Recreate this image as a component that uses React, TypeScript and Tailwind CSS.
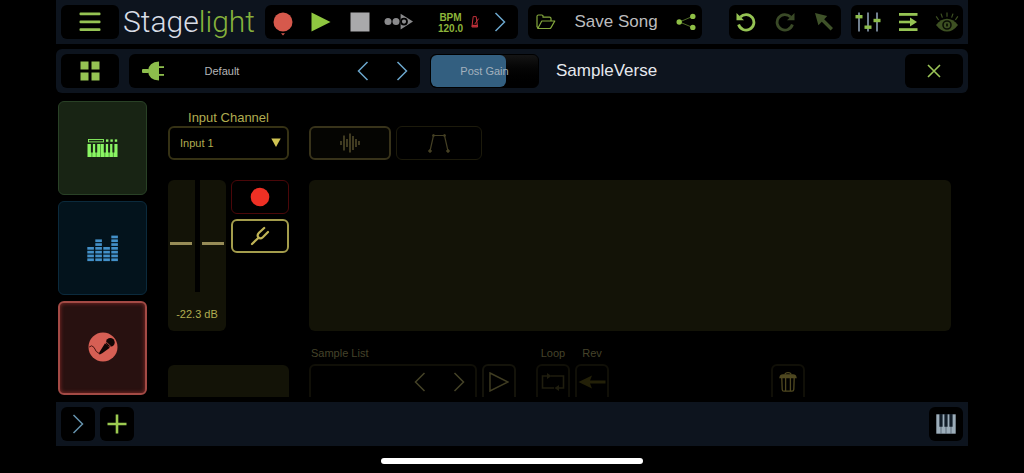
import React, { useState } from "react";
import clsx from "clsx";

type IconButtonProps = {
  label: string;
  className?: string;
  disabled?: boolean;
  children: React.ReactNode;
};

const IconButton = ({ label, className, disabled, children }: IconButtonProps) => (
  <button
    type="button"
    aria-label={label}
    disabled={disabled}
    className={clsx("flex shrink-0 items-center justify-center", className)}
  >
    {children}
  </button>
);

const Chevron = ({ left, className }: { left?: boolean; className?: string }) => (
  <svg width="12" height="20" viewBox="0 0 12 20" fill="none" stroke="currentColor" strokeWidth="1.5" className={className}>
    <path d={left ? "M10.5 1 L1.5 10 L10.5 19" : "M1.5 1 L10.5 10 L1.5 19"} />
  </svg>
);

const TopBar = () => (
  <header className="flex h-11 items-center bg-[#0d141e] px-[5px]">
    <IconButton label="Menu" className="h-[34px] w-[58px] rounded-md bg-black text-[#95c353]">
      <svg width="22" height="20" viewBox="0 0 22 20" fill="currentColor">
        <rect x="0.5" y="0.5" width="21" height="2.8" rx="1" />
        <rect x="0.5" y="8.4" width="21" height="2.8" rx="1" />
        <rect x="0.5" y="16.3" width="21" height="2.8" rx="1" />
      </svg>
    </IconButton>

    <h1 className="ml-1 w-[142px] font-[Roboto,'Liberation_Sans',sans-serif] text-[30px] leading-[42px] font-light text-[#d8dde6]">
      Stage<span className="text-[#86b13c]">light</span>
    </h1>

    <div className="flex h-[34px] w-[253px] items-stretch rounded-md bg-black">
      <IconButton label="Record" className="w-9 text-[#d6594c]">
        <svg width="20" height="28" viewBox="0 0 20 28" fill="currentColor">
          <circle cx="10" cy="14" r="9.5" />
          <path d="M8 25.2 H12 L10 27.4 Z" />
        </svg>
      </IconButton>
      <IconButton label="Play" className="w-[39px] text-[#8fc740]">
        <svg width="20" height="20" viewBox="0 0 20 20" fill="currentColor">
          <path d="M0.5 0.5 L19.5 10 L0.5 19.5 Z" />
        </svg>
      </IconButton>
      <IconButton label="Stop" className="w-[39px] text-[#a9a9ab]">
        <svg width="20" height="20" viewBox="0 0 20 20" fill="currentColor">
          <rect x="0.5" y="0.5" width="19" height="19" />
        </svg>
      </IconButton>
      <IconButton label="Punch" className="w-[39px] text-[#8a8a8c]">
        <svg width="30" height="18" viewBox="0 0 30 18" fill="currentColor">
          <circle cx="4" cy="8.6" r="3.5" />
          <circle cx="12" cy="8.6" r="3.5" />
          <path d="M16.6 0.8 L29 8.6 L16.6 16.4 Z" />
          <circle cx="20" cy="8.6" r="3" fill="none" stroke="#000" strokeWidth="1.8" />
        </svg>
      </IconButton>
      <button type="button" className="ml-5 flex items-center gap-2 text-[10px] leading-[11px] font-bold text-[#8db53a]">
        <span className="pt-px">
          BPM
          <br />
          120.0
        </span>
        <svg width="9" height="12" viewBox="0 0 9 12" fill="none" stroke="#c0313a">
          <path d="M2.2 0.6 H5.2 L6.6 11 H0.9 Z" />
          <path d="M0.9 9.8 H6.6" strokeWidth="2" />
          <path d="M3.8 8 L7.6 2.6" />
        </svg>
      </button>
      <IconButton label="More transport" className="ml-auto w-9 text-[#6ba6cc]">
        <Chevron />
      </IconButton>
    </div>

    <div className="ml-[10px] flex h-[34px] w-[174px] items-center justify-between rounded-md bg-black pr-[6px] pl-2">
      <IconButton label="Open song" className="text-[#84a83d]">
        <svg width="20" height="16" viewBox="0 0 20 16" fill="none" stroke="currentColor" strokeWidth="1.2" strokeLinejoin="round">
          <path d="M3 14.5 L1 12.8 V2.5 Q1 1 2.5 1 H5.8 Q7 1 7 2.2 V3.2 H13.5 Q15 3.2 15 4.6 V7" />
          <path d="M1.8 14.5 L5.8 7 H18.8 L15 13.6 Q14.5 14.5 13.4 14.5 Z" />
        </svg>
      </IconButton>
      <button type="button" className="text-[17px] leading-5 text-[#bcbcbe]">Save Song</button>
      <IconButton label="Share" className="text-[#8fc046]">
        <svg width="20" height="18" viewBox="0 0 20 18" fill="currentColor">
          <path d="M16.5 3.4 L3.5 9 L16.5 14.4" fill="none" stroke="currentColor" strokeWidth="0.8" opacity="0.7" />
          <circle cx="3.2" cy="9" r="2.7" />
          <circle cx="16.8" cy="3.4" r="2.7" />
          <circle cx="16.8" cy="14.4" r="2.7" />
        </svg>
      </IconButton>
    </div>

    <div className="ml-auto flex h-[34px] w-28 items-stretch justify-between rounded-md bg-black px-[7px]">
      <IconButton label="Undo" className="text-[#95c353]">
        <svg width="20" height="20" viewBox="0 0 20 20" fill="none" stroke="currentColor" strokeWidth="2.8">
          <path d="M4.4 5 A7.8 7.8 0 1 1 2.6 12.5" />
          <path d="M0.5 1 V8.2 H8 Z" fill="currentColor" stroke="none" />
        </svg>
      </IconButton>
      <IconButton label="Redo" disabled className="text-[#3a4a27]">
        <svg width="20" height="20" viewBox="0 0 20 20" fill="none" stroke="currentColor" strokeWidth="2.8">
          <path d="M15.6 5 A7.8 7.8 0 1 0 17.4 12.5" />
          <path d="M19.5 1 V8.2 H12 Z" fill="currentColor" stroke="none" />
        </svg>
      </IconButton>
      <IconButton label="Select" disabled className="text-[#3f5229]">
        <svg width="20" height="20" viewBox="0 0 20 20" fill="currentColor">
          <path d="M1 1 L13.2 4 L10.2 7.2 L19 16 L16.6 18.4 L7.8 9.7 L4.4 13.2 Z" />
        </svg>
      </IconButton>
    </div>

    <div className="ml-[10px] flex h-[34px] w-28 items-stretch justify-between rounded-md bg-black px-1">
      <IconButton label="Mixer" className="text-[#8dbd4c]">
        <svg width="26" height="20" viewBox="0 0 26 20" fill="currentColor">
          <path d="M4 0.5 V19.5 M13 0.5 V19.5 M22 0.5 V19.5" stroke="#7c8c9d" strokeWidth="1.8" />
          <rect x="0.5" y="3" width="7" height="3.4" />
          <rect x="9.5" y="13.5" width="7" height="3.4" />
          <rect x="18.5" y="6.8" width="7" height="3.4" />
        </svg>
      </IconButton>
      <IconButton label="Sequence" className="text-[#95c353]">
        <svg width="20" height="20" viewBox="0 0 20 20" fill="currentColor">
          <rect x="1" y="1" width="18.5" height="2.8" />
          <rect x="1" y="8.7" width="13" height="2.6" />
          <path d="M12 5.6 L19 10 L12 14.4 Z" />
          <rect x="1" y="16.2" width="18.5" height="2.8" />
        </svg>
      </IconButton>
      <IconButton label="Show" disabled className="text-[#3d5022]">
        <svg width="24" height="20" viewBox="0 0 24 20" fill="currentColor">
          <path d="M1 13 Q6 6.8 12 6.8 Q18 6.8 23 13 Q18 19.6 12 19.6 Q6 19.6 1 13 Z" />
          <circle cx="12" cy="13" r="4" fill="none" stroke="#0a0e05" strokeWidth="1.6" />
          <ellipse cx="12" cy="13" rx="1" ry="1.8" fill="#0a0e05" />
          <path d="M1.2 4.4 L3.6 8 M6 1.6 L7.4 5.6 M12 0.6 V4.8 M18 1.6 L16.6 5.6 M22.8 4.4 L20.4 8" stroke="currentColor" strokeWidth="1.2" />
        </svg>
      </IconButton>
    </div>
  </header>
);

const DeviceBar = () => {
  const [gain, setGain] = useState(70);

  return (
    <div className="mt-[5px] flex h-11 items-center rounded-md bg-[#0d141e] px-[5px]">
      <IconButton label="Grid view" className="h-[34px] w-[58px] rounded-md bg-black text-[#95c353]">
        <svg width="20" height="20" viewBox="0 0 20 20" fill="currentColor">
          <rect x="0.5" y="0.5" width="8" height="8" />
          <rect x="11.5" y="0.5" width="8" height="8" />
          <rect x="0.5" y="11.5" width="8" height="8" />
          <rect x="11.5" y="11.5" width="8" height="8" />
        </svg>
      </IconButton>

      <div className="ml-[10px] flex h-[34px] w-[291px] items-stretch rounded-md bg-black">
        <IconButton label="Plugin" className="w-12 text-[#8dbd4c]">
          <svg width="24" height="20" viewBox="0 0 24 20" fill="currentColor">
            <rect x="1" y="8" width="7" height="4" rx="1" />
            <path d="M18 0.5 V19.5 Q7.5 19 7 10 Q7.5 1 18 0.5 Z" />
            <rect x="18" y="5.2" width="5" height="1.8" />
            <rect x="18" y="13" width="5" height="1.8" />
          </svg>
        </IconButton>
        <button type="button" className="w-[90px] text-[11px] text-[#b5b5b7]">Default</button>
        <div className="ml-auto flex gap-[3px] text-[#6ba6cc]">
          <IconButton label="Previous preset" className="w-9">
            <Chevron left />
          </IconButton>
          <IconButton label="Next preset" className="w-9">
            <Chevron />
          </IconButton>
        </div>
      </div>

      <label className="relative ml-[10px] flex h-[34px] w-[109px] items-center justify-center overflow-hidden rounded-md border border-black bg-linear-to-b from-[#151515] to-black">
        <span className="absolute inset-y-0 left-0 rounded-md bg-[#335f80]" style={{ width: `${gain}%` }} />
        <span className="relative text-[11px] text-[#a3b1bd]">Post Gain</span>
        <input
          type="range"
          value={gain}
          onChange={(e) => setGain(Number(e.target.value))}
          className="absolute inset-0 cursor-pointer opacity-0"
        />
      </label>

      <h2 className="ml-[17px] text-[17px] leading-5 text-[#e6e9ee]">SampleVerse</h2>

      <IconButton label="Close" className="ml-auto h-[34px] w-[58px] rounded-md bg-black text-[#9cc558]">
        <svg width="14" height="14" viewBox="0 0 14 14" fill="none" stroke="currentColor" strokeWidth="1.6">
          <path d="M1 1 L13 13 M13 1 L1 13" />
        </svg>
      </IconButton>
    </div>
  );
};

const eqBars = [4, 6, 4, 7];

const InstrumentTabs = () => (
  <nav className="ml-[2px] flex w-[89px] shrink-0 flex-col gap-[6px]">
    <IconButton label="Keys" className="h-[94px] rounded-md border border-[#294126] bg-[#182414] text-[#8af564]">
      <svg width="31" height="20" viewBox="0 0 31 20" fill="currentColor">
        <rect x="1.5" y="1.5" width="15" height="2.4" fill="none" stroke="currentColor" strokeWidth="0.9" />
        <rect x="19" y="1.4" width="2.4" height="2.4" />
        <rect x="23.4" y="1.4" width="2.4" height="2.4" />
        <rect x="27.8" y="1.4" width="2.4" height="2.4" />
        <rect x="0.5" y="6" width="30" height="13" />
        <path d="M4.9 6 V19 M9.2 6 V19 M13.5 6 V19 M17.8 6 V19 M22.1 6 V19 M26.4 6 V19" stroke="#2c6b1f" strokeWidth="0.6" />
        <path d="M4.9 6 V14.5 M9.2 6 V14.5 M17.8 6 V14.5 M22.1 6 V14.5 M26.4 6 V14.5" stroke="#182414" strokeWidth="2" />
      </svg>
    </IconButton>
    <IconButton label="Beats" className="h-[94px] rounded-md border border-[#0b2a3c] bg-[#03131c] text-[#4390c8]">
      <svg width="31" height="27" viewBox="0 0 31 27" fill="currentColor">
        {eqBars.map((rows, bar) =>
          Array.from({ length: rows }, (_, row) => (
            <rect key={`${bar}-${row}`} x={bar * 8 + 0.3} y={23.4 - row * 3.8} width="6.6" height="2.7" />
          ))
        )}
      </svg>
    </IconButton>
    <IconButton label="Vocals" className="h-[94px] rounded-md border-2 border-[#a34a45] bg-[#281110] shadow-[inset_0_0_4px_#8a2c2a] text-[#d65f54]">
      <svg width="30" height="32" viewBox="0 0 30 32" fill="currentColor">
        <circle cx="15" cy="15" r="14.5" />
        <circle cx="22.3" cy="10.4" r="4.4" fill="#100504" />
        <path d="M17 11.2 L21.8 15.8 L14.2 21.2 L11.8 22.6 L10.8 21.4 L12 19.2 Z" fill="#100504" />
        <path d="M18 9.8 L23.6 15.2" stroke="#d65f54" strokeWidth="0.8" />
        <path d="M1.2 15 Q3.8 12.4 6 15.4 Q7.6 20.2 11.6 21.8" fill="none" stroke="#4c1512" strokeWidth="1" />
      </svg>
    </IconButton>
  </nav>
);

type FaderProps = { label: string; value: number; onChange: (v: number) => void };

const Fader = ({ label, value, onChange }: FaderProps) => (
  <input
    type="range"
    aria-label={label}
    value={value}
    onChange={(e) => onChange(Number(e.target.value))}
    className="h-[112px] w-[26px] appearance-none bg-transparent [direction:rtl] [writing-mode:vertical-lr] [&::-webkit-slider-thumb]:h-[3px] [&::-webkit-slider-thumb]:w-[22px] [&::-webkit-slider-thumb]:appearance-none [&::-webkit-slider-thumb]:bg-[#978c57]"
  />
);

const InputColumn = () => {
  const [left, setLeft] = useState(43);
  const [right, setRight] = useState(43);

  return (
    <section className="flex w-[121px] shrink-0 flex-col pt-2">
      <label htmlFor="input-channel" className="text-center text-[13px] leading-[17px] text-[#b1ad50]">
        Input Channel
      </label>
      <div className="relative">
        <select
          id="input-channel"
          className="h-[34px] w-full appearance-none rounded-md border-2 border-[#353114] bg-black px-[10px] text-[11px] text-[#b1ad50]"
        >
          <option>Input 1</option>
        </select>
        <svg width="10" height="10" viewBox="0 0 10 10" fill="#d0c452" className="pointer-events-none absolute top-3 right-2">
          <path d="M0.3 0.5 H9.7 L5 9 Z" />
        </svg>
      </div>

      <div className="mt-5 flex justify-between">
        <div className="flex h-[151px] w-[58px] flex-col overflow-hidden rounded-md bg-[#131307]">
          <div className="flex justify-between">
            <Fader label="Input level left" value={left} onChange={setLeft} />
            <span className="w-[5px] bg-black" />
            <Fader label="Input level right" value={right} onChange={setRight} />
          </div>
          <p className="mt-[14px] text-center text-[11px] leading-4 text-[#b1ad50]">-22.3 dB</p>
        </div>
        <div className="flex w-[58px] flex-col gap-[5px]">
          <IconButton label="Arm recording" className="h-[34px] rounded-md border border-[#4a0709] bg-black text-[#ee3024]">
            <svg width="20" height="20" viewBox="0 0 20 20" fill="currentColor">
              <circle cx="10" cy="10" r="9.3" />
            </svg>
          </IconButton>
          <IconButton label="Tuner" className="h-[34px] rounded-md border-2 border-[#a39c4c] bg-black text-[#c0b456]">
            <svg width="20" height="20" viewBox="0 0 20 20" fill="none" stroke="currentColor" strokeWidth="2.2" strokeLinecap="round">
              <path d="M2 18 L8 12.2 M14.2 2 L9 6.8 Q6.6 9.4 8.4 11.4 Q10.4 13.4 12.8 11.2 L18 6" />
            </svg>
          </IconButton>
        </div>
      </div>

      <div className="mt-[34px] h-8 rounded-t-md bg-[#131307]" />
    </section>
  );
};

const SampleColumn = () => (
  <section className="flex min-w-0 flex-1 flex-col pt-[25px]">
    <div className="flex gap-[5px]">
      <IconButton label="Waveform" className="h-[34px] w-[82px] rounded-md border-2 border-[#38331a] bg-[#050502] text-[#4b4526]">
        <svg width="20" height="20" viewBox="0 0 20 20" stroke="currentColor" strokeWidth="1.7">
          <path d="M1 8 V12 M4 2.5 V17.5 M7 6 V14 M10 0.5 V19.5 M13 3 V17 M16 6 V14 M19 8 V12" />
        </svg>
      </IconButton>
      <IconButton label="Envelope" className="h-[34px] w-[86px] rounded-md border border-[#1c1a0b] bg-black text-[#454024]">
        <svg width="22" height="20" viewBox="0 0 22 20" fill="currentColor" stroke="currentColor">
          <path d="M2 18 L5.5 2.5 H16.5 L20 18" fill="none" strokeWidth="1.2" />
          <circle cx="2" cy="18" r="1.3" />
          <circle cx="5.5" cy="2.5" r="1" />
          <circle cx="16.5" cy="2.5" r="1" />
          <circle cx="20" cy="18" r="1.3" />
        </svg>
      </IconButton>
    </div>

    <div className="mt-5 h-[151px] rounded-md bg-[#131307]" />

    <div className="mt-[14px] flex items-end text-[11px] text-[#45432a]">
      <div>
        <h3 className="pl-[2px] leading-4">Sample List</h3>
        <div className="mt-[3px] flex h-[33px] w-[168px] justify-end gap-[7px] rounded-t-md border-2 border-b-0 border-[#100f07] text-[#454227]">
          <IconButton label="Previous sample" disabled className="w-8">
            <Chevron left />
          </IconButton>
          <IconButton label="Next sample" disabled className="w-8">
            <Chevron />
          </IconButton>
        </div>
      </div>
      <IconButton label="Play sample" disabled className="ml-[5px] h-[33px] w-[34px] rounded-t-md border-2 border-b-0 border-[#14130a] text-[#403d22]">
        <svg width="20" height="20" viewBox="0 0 20 20" fill="none" stroke="currentColor" strokeWidth="1.4">
          <path d="M1 1 L19 10 L1 19 Z" />
        </svg>
      </IconButton>
      <div className="ml-5 flex w-[34px] flex-col items-center">
        <span className="leading-4">Loop</span>
        <IconButton label="Loop" disabled className="mt-[3px] h-[33px] w-full rounded-t-md border-2 border-b-0 border-[#100f07] text-[#1f1d0e]">
          <svg width="24" height="18" viewBox="0 0 24 18" fill="none" stroke="currentColor" strokeWidth="1.6">
            <path d="M10 3 H22.5 V15 H18 M13 15 H1.5 V3 H6" />
            <path d="M6 0 L10.5 3 L6 6 Z M18 12 L13.5 15 L18 18 Z" fill="currentColor" stroke="none" />
          </svg>
        </IconButton>
      </div>
      <div className="ml-[5px] flex w-[34px] flex-col items-center">
        <span className="leading-4">Rev</span>
        <IconButton label="Reverse" disabled className="mt-[3px] h-[33px] w-full rounded-t-md border-2 border-b-0 border-[#100f07] text-[#232008]">
          <svg width="28" height="14" viewBox="0 0 28 14" fill="currentColor">
            <path d="M0.5 7 L14 0.5 L12 5.4 H27.5 V8.6 H12 L14 13.5 Z" />
          </svg>
        </IconButton>
      </div>
      <IconButton label="Delete sample" disabled className="mr-[146px] ml-auto h-[33px] w-[34px] rounded-t-md border-2 border-b-0 border-[#100f07] text-[#4f4820]">
        <svg width="18" height="20" viewBox="0 0 18 20" fill="none" stroke="currentColor" strokeWidth="1.3">
          <path d="M6 2.6 Q6 0.7 9 0.7 Q12 0.7 12 2.6" />
          <path d="M1 5.6 Q1.4 3 4 3 H14 Q16.6 3 17 5.6 Z" fill="currentColor" />
          <path d="M2.8 6 L3.2 17.4 Q3.3 19.2 5 19.2 H13 Q14.7 19.2 14.8 17.4 L15.2 6 M6.6 6 V19 M11.4 6 V19" />
        </svg>
      </IconButton>
    </div>
  </section>
);

const BottomBar = () => (
  <footer className="mt-[5px] flex h-11 items-center gap-[5px] bg-[#0d141e] px-[5px]">
    <IconButton label="Expand" className="h-[34px] w-[34px] rounded-md bg-black text-[#6592ac]">
      <Chevron />
    </IconButton>
    <IconButton label="Add track" className="h-[34px] w-[34px] rounded-md bg-black text-[#9cca50]">
      <svg width="20" height="20" viewBox="0 0 20 20" fill="none" stroke="currentColor" strokeWidth="2.6">
        <path d="M10 0.5 V19.5 M0.5 10 H19.5" />
      </svg>
    </IconButton>
    <IconButton label="Keyboard" className="ml-auto h-[34px] w-[34px] rounded-md bg-black text-[#9cadb9]">
      <svg width="20" height="20" viewBox="0 0 20 20" fill="currentColor">
        <rect x="0.3" y="0.3" width="19.4" height="19.4" />
        <path d="M5 0 V20 M10 0 V20 M15 0 V20" stroke="#4e5c68" strokeWidth="0.8" />
        <path d="M5 0 V12.8 M10 0 V12.8 M15 0 V12.8" stroke="#121d28" strokeWidth="3.2" />
      </svg>
    </IconButton>
  </footer>
);

const App = () => (
  <div className="min-h-screen bg-black px-14 font-['Liberation_Sans',Arial,sans-serif]">
    <TopBar />
    <DeviceBar />
    <main className="mt-2 flex">
      <InstrumentTabs />
      <div className="flex min-w-0 flex-1 gap-5 pr-[17px] pl-[21px]">
        <InputColumn />
        <SampleColumn />
      </div>
    </main>
    <BottomBar />
    <div className="mx-auto mt-3 h-[6px] w-[262px] rounded-full bg-white" />
  </div>
);

export default App;
